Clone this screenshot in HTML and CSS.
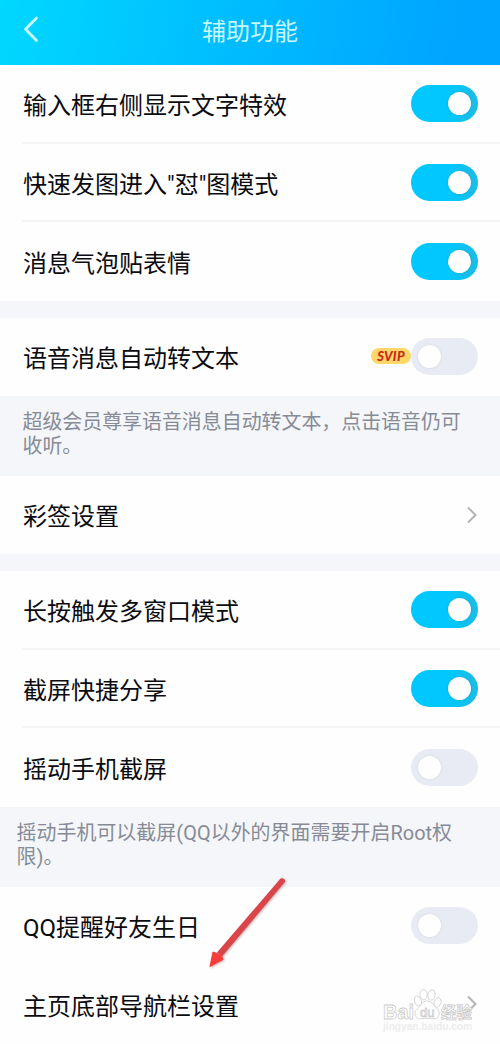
FILE: index.html
```html
<!DOCTYPE html>
<html lang="zh-CN">
<head>
<meta charset="utf-8">
<title>辅助功能</title>
<link rel="stylesheet" href="styles.css">
</head>
<body>
<div class="screen">
  <header class="header">
    <svg class="back" width="16" height="28" viewBox="0 0 16 28"><path d="M13.5 3 2.5 14.2 13.5 25.5"/></svg>
    <h1 class="title">辅助功能</h1>
  </header>
  <main class="list">
    <section class="group">
      <div class="row"><span class="label">输入框右侧显示文字特效</span><span class="toggle on"></span></div>
      <div class="row"><span class="label">快速发图进入"怼"图模式</span><span class="toggle on"></span></div>
      <div class="row"><span class="label">消息气泡贴表情</span><span class="toggle on"></span></div>
    </section>
    <section class="group gap">
      <div class="row"><span class="label">语音消息自动转文本</span><span class="badge">SVIP</span><span class="toggle"></span></div>
    </section>
    <p class="note">超级会员尊享语音消息自动转文本，点击语音仍可<br>收听。</p>
    <section class="group">
      <div class="row"><span class="label">彩签设置</span><svg class="chevron" width="12" height="20" viewBox="0 0 12 20"><path d="M2 2.5 9.5 10 2 17.5"/></svg></div>
    </section>
    <section class="group gap">
      <div class="row"><span class="label">长按触发多窗口模式</span><span class="toggle on"></span></div>
      <div class="row"><span class="label">截屏快捷分享</span><span class="toggle on"></span></div>
      <div class="row"><span class="label">摇动手机截屏</span><span class="toggle"></span></div>
    </section>
    <p class="note wide">摇动手机可以截屏(QQ以外的界面需要开启Root权<br>限)。</p>
    <section class="group plain">
      <div class="row"><span class="label">QQ提醒好友生日</span><span class="toggle"></span></div>
      <div class="row"><span class="label">主页底部导航栏设置</span><svg class="chevron" width="12" height="20" viewBox="0 0 12 20"><path d="M2 2.5 9.5 10 2 17.5"/></svg></div>
    </section>
  </main>
  <svg class="arrow" width="90" height="112" viewBox="0 0 90 112">
    <path class="shaft" d="M80.5 17.5Q84.5 16 85.3 20.5L22 95.5 17 91.5Z"/>
    <path class="head" d="M10 105.5 13 91 17 92.5 22 95.5 23 98.5Z"/>
  </svg>
  <svg class="watermark" width="100" height="56" viewBox="0 0 100 56">
    <g class="mark">
      <ellipse cx="38" cy="18" rx="3.5" ry="5" transform="rotate(-18 38 18)"/>
      <ellipse cx="43.5" cy="11.5" rx="3.6" ry="5.2"/>
      <ellipse cx="51.5" cy="12" rx="3.6" ry="5.2" transform="rotate(10 51.5 12)"/>
      <ellipse cx="57.5" cy="19.5" rx="3.4" ry="4.8" transform="rotate(22 57.5 19.5)"/>
      <path d="M47 18C52 18 53 22 56.5 25C61 29 59.5 36 54 35.8C49 35.2 46 35.3 42 35.8C34.5 36.5 33 29.5 37.5 25.5C41 22.5 42 18 47 18Z"/>
      <text class="bai" x="3" y="35.5" textLength="31" lengthAdjust="spacingAndGlyphs">Bai</text>
      <text class="du" x="40" y="34">du</text>
      <text class="cn" x="61" y="34.5" textLength="31" lengthAdjust="spacingAndGlyphs">经验</text>
    </g>
    <text class="site" x="3" y="46.5" textLength="89" lengthAdjust="spacingAndGlyphs">jingyan.baidu.com</text>
  </svg>
</div>
</body>
</html>
```
FILE: styles.css
```css
* { box-sizing: border-box; }
body { margin: 0; }
.screen {
  position: relative;
  width: 500px;
  height: 1044px;
  overflow: hidden;
  background: #f4f6fa;
  color: #0b0b10;
  font-family: Roboto, "Noto Sans CJK SC", sans-serif;
}
.header {
  display: grid;
  grid-template-columns: 60px 1fr 60px;
  align-items: center;
  height: 65px;
  padding-bottom: 2px;
  background: linear-gradient(100deg, #00d8ff 0%, #00bfff 42%, #00a5ff 90%);
}
.back { margin: -5px 0 0 23px; }
.back path {
  fill: none;
  stroke: #c9faff;
  stroke-width: 2.8;
  stroke-linecap: round;
  stroke-linejoin: round;
}
.title {
  margin: 0;
  color: #c9f8ff;
  font-size: 24px;
  font-weight: 400;
  line-height: 36px;
  text-align: center;
}
.group { background: #fefefe; }
.gap { margin-top: 16.5px; }
.row {
  display: flex;
  align-items: center;
  height: 78.7px;
  padding: 0 22px 1px 23px;
  background: linear-gradient(#f5f5f7, #f5f5f7) 22px 100% / 100% 2px no-repeat;
}
.row:last-child, .plain .row { background: none; }
.label {
  flex: 1;
  padding-top: 5px;
  font-size: 24px;
  line-height: 36px;
  white-space: nowrap;
}
.toggle {
  display: flex;
  align-items: center;
  width: 67px;
  height: 37px;
  padding: 0 7px;
  border-radius: 19px;
  background: #e9ebf4;
}
.toggle::before {
  content: "";
  width: 23px;
  height: 23px;
  border-radius: 50%;
  background: #fefefe;
  box-shadow: 0 0 2px #c9cbd2;
}
.toggle.on {
  justify-content: flex-end;
  background: linear-gradient(90deg, #00c8ff 55%, #18bde8 90%);
}
.toggle.on::before { box-shadow: 0 0 2px #159fc5; }
.badge {
  width: 40px;
  height: 16px;
  border-radius: 8px;
  background: #ffd767;
  color: #c5281b;
  font: italic 900 13px/16px Lato, sans-serif;
  letter-spacing: 0.3px;
  text-align: center;
}
.chevron path { fill: none; stroke: #b4b4b6; stroke-width: 2; }
.note {
  height: 79.5px;
  margin: 0;
  padding: 15px 0 0 22.5px;
  color: #878b96;
  font-size: 19.93px;
  line-height: 23.5px;
  white-space: nowrap;
}
.note.wide { padding-left: 16.5px; letter-spacing: 0.05px; }
.arrow {
  position: absolute;
  left: 200px;
  top: 861px;
  filter: drop-shadow(1px 1px 1px #99777788);
}
.shaft { fill: #d94549; }
.head { fill: #f63d3c; stroke: #f63d3c; stroke-linejoin: round; }
.watermark { position: absolute; left: 380px; top: 983px; }
.mark { fill: #fff; stroke: #cdcdcd; stroke-width: 0.8; }
.bai { font: 700 21px Arial, "Liberation Sans", sans-serif; }
.du { font: 400 13px Arial, "Liberation Sans", sans-serif; }
.cn { font: 700 16px "Noto Sans CJK SC", sans-serif; }
.site {
  fill: #ededed;
  font: 700 10px Arial, "Liberation Sans", sans-serif;
}
```
